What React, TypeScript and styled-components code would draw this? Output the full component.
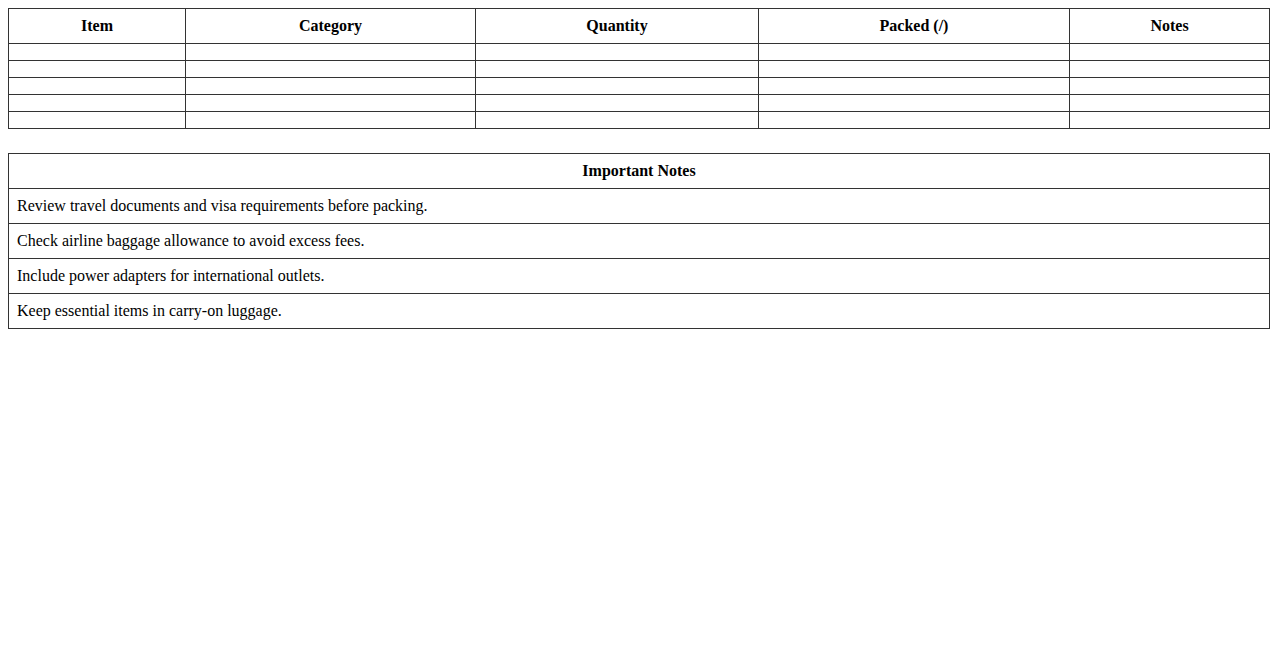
import React from 'react';
import styled, { createGlobalStyle } from 'styled-components';

const GlobalStyle = createGlobalStyle`
  body {
    margin: 8px;
    background: #ffffff;
    color: #000000;
    font-family: 'Liberation Serif', 'Times New Roman', serif;
    font-size: 16px;
  }
`;

const Table = styled.table`
  width: 100%;
  border-collapse: collapse;
  table-layout: fixed;
  margin-bottom: 24px;
`;

const Col = styled.col<{ $w?: number }>`
  width: ${p => (p.$w ? `${p.$w}px` : 'auto')};
`;

const Th = styled.th`
  border: 1px solid #333;
  padding: 8px;
  font-weight: bold;
  text-align: center;
  line-height: 18px;
`;

const Td = styled.td`
  border: 1px solid #333;
  padding: 8px;
  text-align: left;
  line-height: 18px;
`;

const EmptyCell = styled.td`
  border: 1px solid #333;
  padding: 8px;
  height: 0;
  line-height: 0;
`;

const columns: { name: string; w?: number }[] = [
  { name: 'Item', w: 177 },
  { name: 'Category', w: 290 },
  { name: 'Quantity', w: 283 },
  { name: 'Packed (/)', w: 311 },
  { name: 'Notes' },
];

const notes = [
  'Review travel documents and visa requirements before packing.',
  'Check airline baggage allowance to avoid excess fees.',
  'Include power adapters for international outlets.',
  'Keep essential items in carry-on luggage.',
];

const App: React.FC = () => (
  <>
    <GlobalStyle />
    <Table>
      <colgroup>
        {columns.map(c => (
          <Col key={c.name} $w={c.w} />
        ))}
      </colgroup>
      <thead>
        <tr>
          {columns.map(c => (
            <Th key={c.name}>{c.name}</Th>
          ))}
        </tr>
      </thead>
      <tbody>
        {[0, 1, 2, 3, 4].map(r => (
          <tr key={r}>
            {columns.map(c => (
              <EmptyCell key={c.name} />
            ))}
          </tr>
        ))}
      </tbody>
    </Table>

    <Table>
      <thead>
        <tr>
          <Th>Important Notes</Th>
        </tr>
      </thead>
      <tbody>
        {notes.map(n => (
          <tr key={n}>
            <Td>{n}</Td>
          </tr>
        ))}
      </tbody>
    </Table>
  </>
);

export default App;
